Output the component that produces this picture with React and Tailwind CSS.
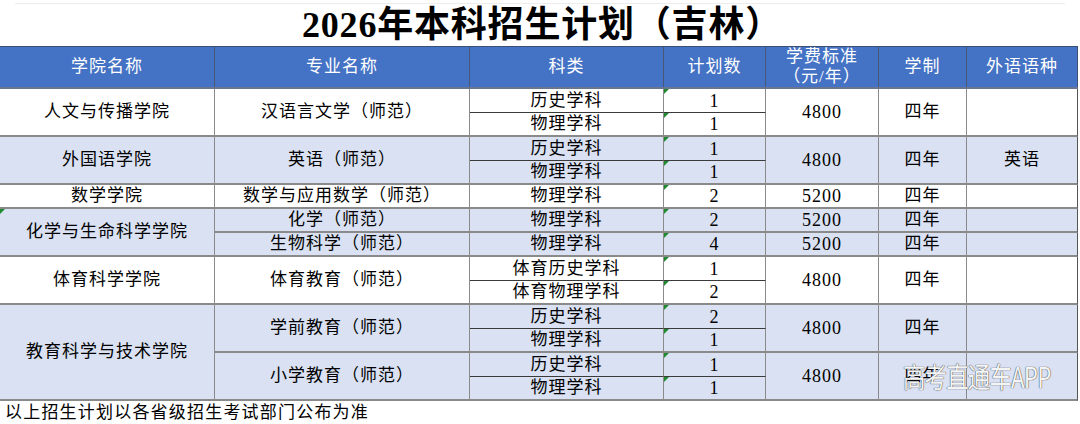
import React from 'react';

const FONT = { fontFamily: '"Liberation Serif", "Noto Sans CJK SC", serif' };

const groups = [
  {
    college: '人文与传播学院',
    shade: false,
    majors: [
      { name: '汉语言文学（师范）', subs: [['历史学科', '1'], ['物理学科', '1']], fee: '4800', lang: '' },
    ],
  },
  {
    college: '外国语学院',
    shade: true,
    majors: [
      { name: '英语（师范）', subs: [['历史学科', '1'], ['物理学科', '1']], fee: '4800', lang: '英语' },
    ],
  },
  {
    college: '数学学院',
    shade: false,
    majors: [{ name: '数学与应用数学（师范）', subs: [['物理学科', '2']], fee: '5200', lang: '' }],
  },
  {
    college: '化学与生命科学学院',
    shade: true,
    flag: true,
    majors: [
      { name: '化学（师范）', subs: [['物理学科', '2']], fee: '5200', lang: '' },
      { name: '生物科学（师范）', subs: [['物理学科', '4']], fee: '5200', lang: '' },
    ],
  },
  {
    college: '体育科学学院',
    shade: false,
    majors: [
      { name: '体育教育（师范）', subs: [['体育历史学科', '1'], ['体育物理学科', '2']], fee: '4800', lang: '' },
    ],
  },
  {
    college: '教育科学与技术学院',
    shade: true,
    majors: [
      { name: '学前教育（师范）', subs: [['历史学科', '2'], ['物理学科', '1']], fee: '4800', lang: '' },
      { name: '小学教育（师范）', subs: [['历史学科', '1'], ['物理学科', '1']], fee: '4800', lang: '' },
    ],
  },
];

const Mark = () => (
  <span className="absolute left-0 top-0 w-0 h-0 border-t-[5px] border-r-[5px] border-t-[#1f8a2e] border-r-transparent" />
);

const Cell = ({ className = '', children }) => (
  <div className={`flex items-center justify-center border-r border-b-2 border-r-[#8a8a8a] border-b-[#8a8a8a] ${className}`}>
    {children}
  </div>
);

const MajorRow = ({ major }) => (
  <div className="flex">
    <Cell className="w-[255px]">{major.name}</Cell>
    <div className="flex flex-col w-[296px]">
      {major.subs.map(([kind, count], i) => {
        const last = i === major.subs.length - 1;
        return (
          <div key={i} className="flex h-[24px]">
            <div
              className={`w-[194px] flex items-center justify-center border-r border-r-[#8a8a8a] ${
                last ? 'border-b-2 border-b-[#8a8a8a]' : 'border-b border-b-[#3a3a3a]'
              }`}
            >
              {kind}
            </div>
            <div
              className={`relative w-[102px] flex items-center justify-center text-[18px] border-r border-r-[#8a8a8a] ${
                last ? 'border-b-2 border-b-[#8a8a8a]' : 'border-b border-b-[#3a3a3a]'
              }`}
            >
              <Mark />
              {count}
            </div>
          </div>
        );
      })}
    </div>
    <Cell className="w-[113px] text-[18px]">{major.fee}</Cell>
    <Cell className="w-[88px]">四年</Cell>
    <Cell className="w-[111px] border-r-[#555]">{major.lang}</Cell>
  </div>
);

const App = () => {
  return (
    <div className="relative w-[1080px] h-[424px] bg-white overflow-hidden text-black" style={FONT}>
      <div className="h-[4px] mx-[15px] border-b border-[#ececec]" />
      <div className="h-[42px] flex items-center justify-center pl-[4px]">
        <h1 className="text-[36px] font-bold leading-none tracking-[0.8px]">2026年本科招生计划（吉林）</h1>
      </div>

      <div className="w-[1078px] text-[17px] tracking-[1px] leading-[20px]">
        <div className="flex h-[43px] bg-[#4472C4] text-white border-t border-b-2 border-t-[#3c4f74] border-b-[#6a7590]">
          <div className="w-[215px] flex items-center justify-center border-r border-[#4a5878]">学院名称</div>
          <div className="w-[255px] flex items-center justify-center border-r border-[#4a5878]">专业名称</div>
          <div className="w-[194px] flex items-center justify-center border-r border-[#4a5878]">科类</div>
          <div className="w-[102px] flex items-center justify-center border-r border-[#4a5878]">计划数</div>
          <div className="w-[113px] flex flex-col items-center justify-center border-r border-[#4a5878]">
            <span>学费标准</span>
            <span>（元/年）</span>
          </div>
          <div className="w-[88px] flex items-center justify-center border-r border-[#4a5878]">学制</div>
          <div className="w-[111px] flex items-center justify-center border-r border-[#3c4f74]">外语语种</div>
        </div>

        {groups.map((g) => (
          <div key={g.college} className={`flex ${g.shade ? 'bg-[#D9E1F2]' : 'bg-white'}`}>
            <Cell className="relative w-[215px]">
              {g.flag && <Mark />}
              {g.college}
            </Cell>
            <div className="flex flex-col">
              {g.majors.map((m) => (
                <MajorRow key={m.name} major={m} />
              ))}
            </div>
          </div>
        ))}
      </div>

      <p className="pl-[5px] pt-[2px] text-[17px] tracking-[1.2px] leading-[20px]">以上招生计划以各省级招生考试部门公布为准</p>

      <div
        className="absolute left-[903px] top-[362px] whitespace-nowrap origin-left scale-x-[0.8] text-[28px] leading-none tracking-[-1px] text-[#f4f4f4] [text-shadow:0_0_1px_#444,0_0_1px_#444]"
        style={{ fontFamily: '"Noto Sans CJK SC", sans-serif' }}
      >
        高考直通车APP
      </div>
    </div>
  );
};

export default App;
